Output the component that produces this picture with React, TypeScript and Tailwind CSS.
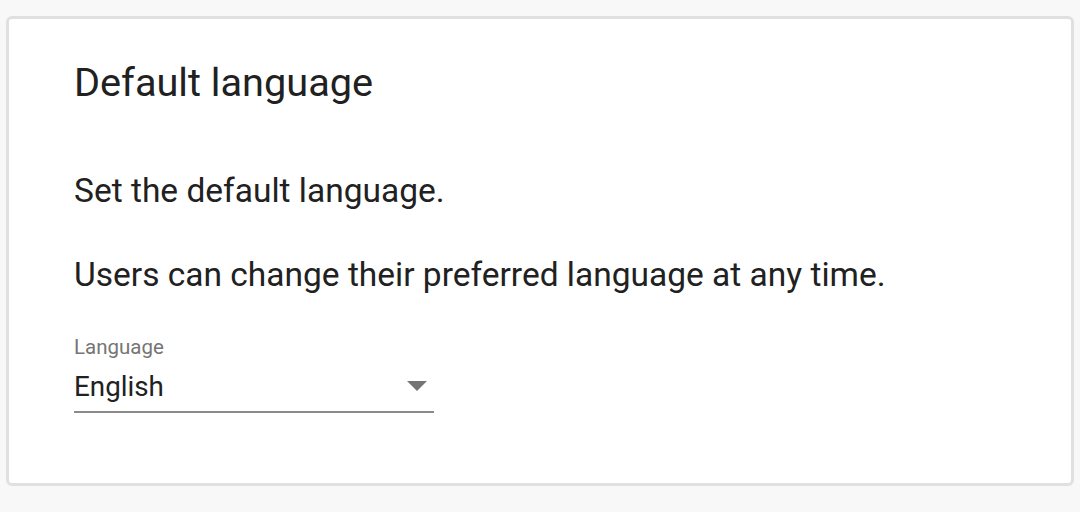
export default function App() {
  return (
    <div className="w-[1080px] h-[512px] bg-[#f8f8f8] pt-4 px-1.5 font-['Roboto',sans-serif]">
      <div className="h-[470px] bg-white border-[3px] border-[#e0e0e0] rounded-md px-[65px] pt-[40px]">
        <h2 className="text-[39.7px] leading-[48px] text-[#212121]">Default language</h2>
        <p className="mt-[64px] text-[33.5px] leading-[40px] text-[#212121]">Set the default language.</p>
        <p className="mt-[44px] text-[33.5px] leading-[40px] text-[#212121]">
          Users can change their preferred language at any time.
        </p>
        <div className="mt-[40px] w-[360px]">
          <div className="text-[20.5px] leading-[24px] text-[#757575]">Language</div>
          <div className="flex items-end justify-between h-[54px] pb-[8px] border-b-2 border-[#8a8a8a]">
            <span className="text-[27.8px] leading-[32px] text-[#212121]">English</span>
            <svg width="20" height="10" viewBox="0 0 20 10" className="mr-[7px] mb-[12px]">
              <path d="M0 0 L20 0 L10 10 Z" fill="#757575" />
            </svg>
          </div>
        </div>
      </div>
    </div>
  );
}
